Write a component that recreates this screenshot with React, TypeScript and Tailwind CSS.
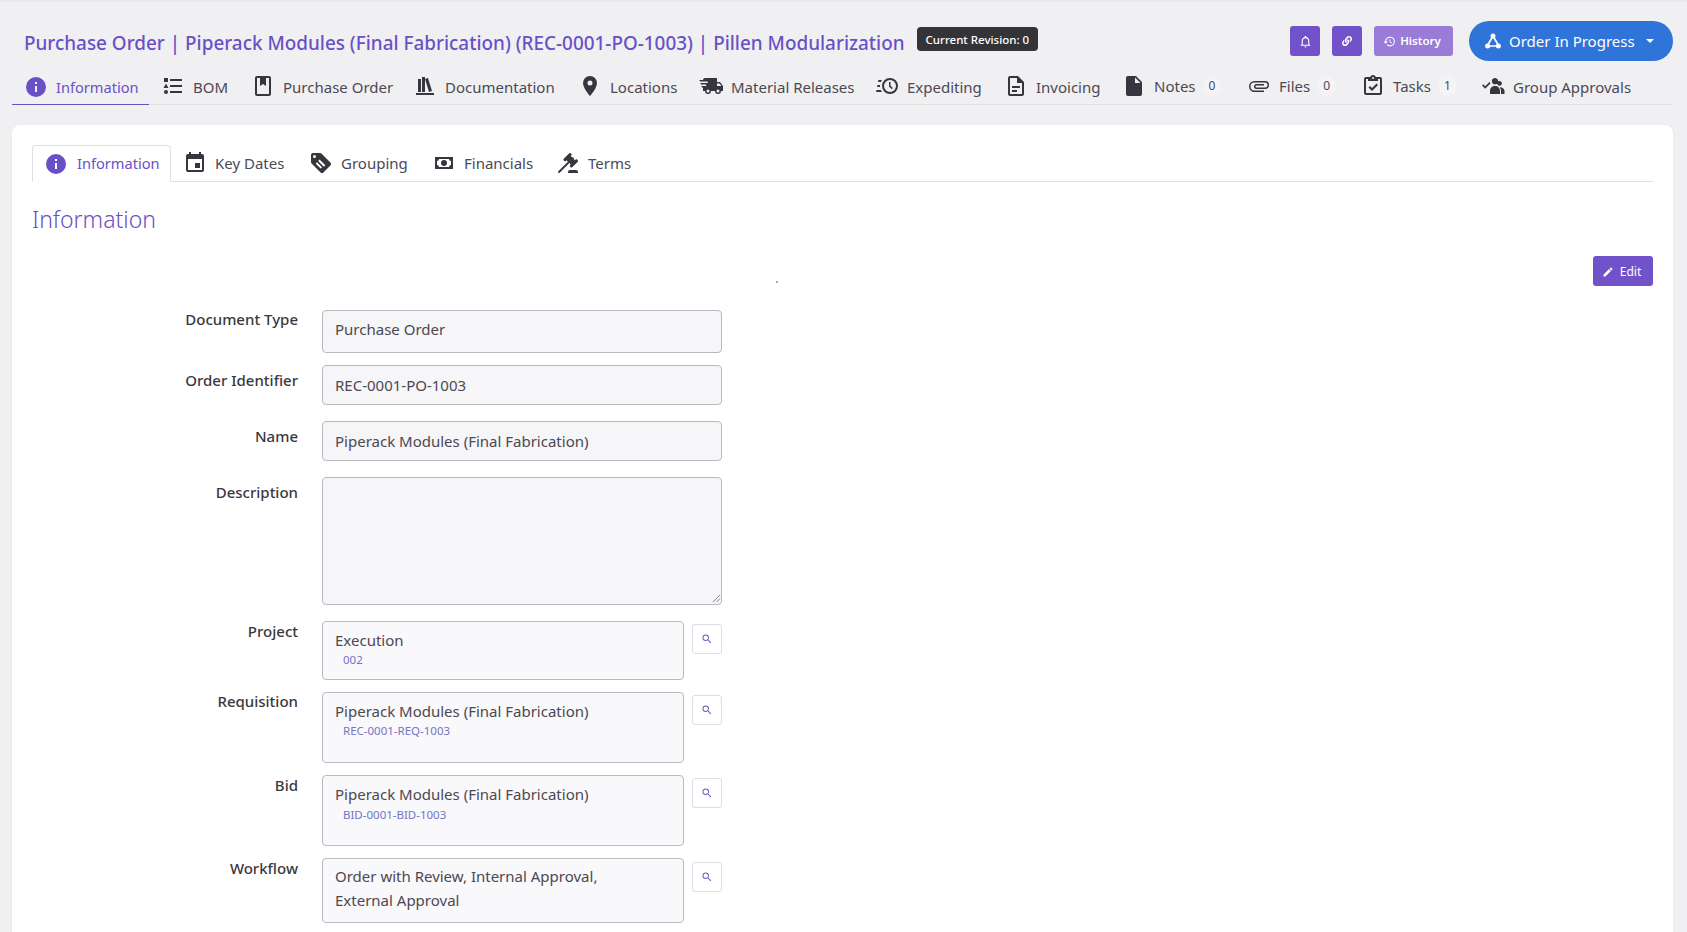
import { FaLink } from 'react-icons/fa';

const P = {
  info: 'M13,9H11V7H13M13,17H11V11H13M12,2A10,10 0 0,0 2,12A10,10 0 0,0 12,22A10,10 0 0,0 22,12A10,10 0 0,0 12,2Z',
  list: 'M5,9.5L7.5,14H2.5L5,9.5M3,4H7V8H3V4M5,20A2,2 0 0,0 7,18A2,2 0 0,0 5,16A2,2 0 0,0 3,18A2,2 0 0,0 5,20M9,5V7H21V5H9M9,19H21V17H9V19M9,13H21V11H9V13Z',
  book: 'M18 2H6C4.9 2 4 2.9 4 4V20C4 21.1 4.9 22 6 22H18C19.1 22 20 21.1 20 20V4C20 2.9 19.1 2 18 2M18 20H6V4H9V12L12 10L15 12V4H18V20Z',
  shelf: 'M9 3V18H12V3H9M12 5L16 18L19 17L15 4L12 5M5 5V18H8V5H5M3 19V21H21V19H3Z',
  marker: 'M12,11.5A2.5,2.5 0 0,1 9.5,9A2.5,2.5 0 0,1 12,6.5A2.5,2.5 0 0,1 14.5,9A2.5,2.5 0 0,1 12,11.5M12,2A7,7 0 0,0 5,9C5,14.25 12,22 12,22C12,22 19,14.25 19,9A7,7 0 0,0 12,2Z',
  truck: 'M3,13.5L2.25,12H7.5L6.9,10.5H2L1.25,9H9.05L8.45,7.5H1.11L0.25,6H4A2,2 0 0,1 6,4H18V8H21L24,12V17H22A3,3 0 0,1 19,20A3,3 0 0,1 16,17H12A3,3 0 0,1 9,20A3,3 0 0,1 6,17H4V13.5H3M19,18.5A1.5,1.5 0 0,0 20.5,17A1.5,1.5 0 0,0 19,15.5A1.5,1.5 0 0,0 17.5,17A1.5,1.5 0 0,0 19,18.5M20.5,9.5H18V12H22.46L20.5,9.5M9,18.5A1.5,1.5 0 0,0 10.5,17A1.5,1.5 0 0,0 9,15.5A1.5,1.5 0 0,0 7.5,17A1.5,1.5 0 0,0 9,18.5Z',
  clock: 'M15,4A8,8 0 0,1 23,12A8,8 0 0,1 15,20A8,8 0 0,1 7,12A8,8 0 0,1 15,4M15,6A6,6 0 0,0 9,12A6,6 0 0,0 15,18A6,6 0 0,0 21,12A6,6 0 0,0 15,6M14,8H15.5V11.78L17.83,14.11L16.77,15.17L14,12.4V8M2,18A1,1 0 0,1 1,17A1,1 0 0,1 2,16H5.83C6.14,16.71 6.54,17.38 7,18H2M3,13A1,1 0 0,1 2,12A1,1 0 0,1 3,11H5.05L5,12L5.05,13H3M4,8A1,1 0 0,1 3,7A1,1 0 0,1 4,6H7C6.54,6.62 6.14,7.29 5.83,8H4Z',
  doc: 'M6,2A2,2 0 0,0 4,4V20A2,2 0 0,0 6,22H18A2,2 0 0,0 20,20V8L14,2H6M6,4H13V9H18V20H6V4M8,12V14H16V12H8M8,16V18H13V16H8Z',
  file: 'M13,9V3.5L18.5,9M6,2C4.89,2 4,2.89 4,4V20A2,2 0 0,0 6,22H18A2,2 0 0,0 20,20V8L14,2H6Z',
  clip: 'M7.5,18A5.5,5.5 0 0,1 2,12.5A5.5,5.5 0 0,1 7.5,7H18A4,4 0 0,1 22,11A4,4 0 0,1 18,15H9.5A2.5,2.5 0 0,1 7,12.5A2.5,2.5 0 0,1 9.5,10H17V11.5H9.5A1,1 0 0,0 8.5,12.5A1,1 0 0,0 9.5,13.5H18A2.5,2.5 0 0,0 20.5,11A2.5,2.5 0 0,0 18,8.5H7.5A4,4 0 0,0 3.5,12.5A4,4 0 0,0 7.5,16.5H17V18H7.5Z',
  task: 'M19,3H14.82C14.4,1.84 13.3,1 12,1C10.7,1 9.6,1.84 9.18,3H5A2,2 0 0,0 3,5V19A2,2 0 0,0 5,21H19A2,2 0 0,0 21,19V5A2,2 0 0,0 19,3M12,3A1,1 0 0,1 13,4A1,1 0 0,1 12,5A1,1 0 0,1 11,4A1,1 0 0,1 12,3M7,7H17V5H19V19H5V5H7V7M7.5,13.5L9,12L11,14L15.5,9.5L17,11L11,17L7.5,13.5Z',
  group: 'M14 4A3.2 3.2 0 1 1 13.99 4M18.5 7A2.4 2.4 0 1 1 18.49 7M9 17C9 14 11 12 14 12S19 14 19 17V20H9V17M20 20V17C20 15.5 19.6 14.2 18.8 13.2C21 13.2 23.5 14.6 23.5 17V20H20M1 11.5L2.2 10.3L4.2 12.3L8.4 8.1L9.6 9.3L4.2 14.7L1 11.5Z',
  calendar: 'M19,19H5V8H19M16,1V3H8V1H6V3H5C3.89,3 3,3.89 3,5V19A2,2 0 0,0 5,21H19A2,2 0 0,0 21,19V5C21,3.89 20.1,3 19,3H18V1M17,12H12V17H17V12Z',
  tag: 'M21.41,11.58L12.41,2.58C12.05,2.22 11.55,2 11,2H4C2.89,2 2,2.89 2,4V11C2,11.55 2.22,12.05 2.59,12.41L11.58,21.41C11.95,21.77 12.45,22 13,22C13.55,22 14.05,21.77 14.41,21.41L21.41,14.41C21.78,14.05 22,13.55 22,13C22,12.44 21.77,11.94 21.41,11.58M5.5,7A1.5,1.5 0 1,1 5.5,4A1.5,1.5 0 1,1 5.5,7M10.6,8.6L9.2,10L14.9,15.7L16.3,14.3L10.6,8.6M8,11.2L6.6,12.6L11.6,17.6L13,16.2L8,11.2Z',
  cash: 'M3,6H21V18H3V6M12,9A3,3 0 0,1 15,12A3,3 0 0,1 12,15A3,3 0 0,1 9,12A3,3 0 0,1 12,9M7,8A2,2 0 0,1 5,10V14A2,2 0 0,1 7,16H17A2,2 0 0,1 19,14V10A2,2 0 0,1 17,8H7Z',
  gavel: 'M2.3,20.28L11.9,10.68L10.5,9.26L9.78,9.97C9.39,10.36 8.76,10.36 8.37,9.97L7.66,9.26C7.27,8.87 7.27,8.24 7.66,7.85L13.32,2.19C13.71,1.8 14.34,1.8 14.73,2.19L15.44,2.9C15.83,3.29 15.83,3.92 15.44,4.31L14.73,5L16.15,6.43C16.54,6.04 17.17,6.04 17.56,6.43C17.95,6.82 17.95,7.46 17.56,7.85L18.97,9.26L19.68,8.55C20.07,8.16 20.71,8.16 21.1,8.55L21.8,9.26C22.19,9.65 22.19,10.29 21.8,10.68L16.15,16.33C15.76,16.72 15.12,16.72 14.73,16.33L14.03,15.63C13.63,15.24 13.63,14.6 14.03,14.21L14.73,13.5L13.32,12.09L3.71,21.7C3.32,22.09 2.69,22.09 2.3,21.7C1.91,21.31 1.91,20.67 2.3,20.28M20,19A2,2 0 0,1 22,21V22H12V21A2,2 0 0,1 14,19H20Z',
  bell: 'M10 21H14C14 22.1 13.1 23 12 23S10 22.1 10 21M21 19V20H3V19L5 17V11C5 7.9 7 5.2 10 4.3V4C10 2.9 10.9 2 12 2S14 2.9 14 4V4.3C17 5.2 19 7.9 19 11V17L21 19M17 11C17 8.2 14.8 6 12 6S7 8.2 7 11V18H17V11Z',
  history: 'M13.5,8H12V13L16.28,15.54L17,14.33L13.5,12.25V8M13,3A9,9 0 0,0 4,12H1L4.96,16.03L9,12H6A7,7 0 0,1 13,5A7,7 0 0,1 20,12A7,7 0 0,1 13,19C11.07,19 9.32,18.21 8.06,16.94L6.64,18.36C8.27,20 10.5,21 13,21A9,9 0 0,0 22,12A9,9 0 0,0 13,3',
  pencil: 'M20.71,7.04C21.1,6.65 21.1,6 20.71,5.63L18.37,3.29C18,2.9 17.35,2.9 16.96,3.29L15.12,5.12L18.87,8.87M3,17.25V21H6.75L17.81,9.93L14.06,6.18L3,17.25Z',
  search: 'M9.5,3A6.5,6.5 0 0,1 16,9.5C16,11.11 15.41,12.59 14.44,13.73L14.71,14H15.5L20.5,19L19,20.5L14,15.5V14.71L13.73,14.44C12.59,15.41 11.11,16 9.5,16A6.5,6.5 0 0,1 3,9.5A6.5,6.5 0 0,1 9.5,3M9.5,5C7,5 5,7 5,9.5C5,12 7,14 9.5,14C12,14 14,12 14,9.5C14,7 12,5 9.5,5Z',
};

function Icon({ d, className }: { d: string; className?: string }) {
  return (
    <svg viewBox="0 0 24 24" fill="currentColor" className={className}>
      {/* the tag's stripes are holes cut out of its body */}
      <path d={d} fillRule={d === P.tag ? 'evenodd' : undefined} />
    </svg>
  );
}

const navItems = [
  { label: 'Information', icon: P.info, width: 'w-[137px]', active: true },
  { label: 'BOM', icon: P.list, width: 'w-[90px]' },
  { label: 'Purchase Order', icon: P.book, width: 'w-[162px]' },
  { label: 'Documentation', icon: P.shelf, width: 'w-[165px]' },
  { label: 'Locations', icon: P.marker, width: 'w-[121px]' },
  { label: 'Material Releases', icon: P.truck, width: 'w-[176px]' },
  { label: 'Expediting', icon: P.clock, width: 'w-[129px]' },
  { label: 'Invoicing', icon: P.doc, width: 'w-[118px]' },
  { label: 'Notes', icon: P.file, width: 'w-[125px]', count: 0 },
  { label: 'Files', icon: P.clip, width: 'w-[114px]', count: 0 },
  { label: 'Tasks', icon: P.task, width: 'w-[120px]', count: 1 },
  { label: 'Group Approvals', icon: P.group, width: 'w-[188px]' },
];

const subTabs = [
  { label: 'Key Dates', icon: P.calendar, width: 'w-[126px]' },
  { label: 'Grouping', icon: P.tag, width: 'w-[123px]' },
  { label: 'Financials', icon: P.cash, width: 'w-[124px]' },
  { label: 'Terms', icon: P.gavel, width: 'w-[90px]' },
];

function Label({ children, className }: { children: string; className: string }) {
  return <div className={`w-[286px] shrink-0 text-right font-medium leading-6 text-[#3a3840] ${className}`}>{children}</div>;
}

function Field({ label, labelPad, box, value, valuePad, rowGap }: { label: string; labelPad: string; box: string; value: string; valuePad: string; rowGap: string }) {
  return (
    <div className={`flex ${rowGap}`}>
      <Label className={labelPad}>{label}</Label>
      <div className={`ml-6 w-[400px] rounded border border-[#b9b9bf] bg-[#f6f5f7] leading-6 text-[#4b4953] ${box} ${valuePad}`}>{value}</div>
    </div>
  );
}

function Lookup({ label, labelPad, box, rowGap, btnTop, children }: { label: string; labelPad: string; box: string; rowGap: string; btnTop: string; children: React.ReactNode }) {
  return (
    <div className={`flex ${rowGap}`}>
      <Label className={labelPad}>{label}</Label>
      <div className={`ml-6 w-[362px] rounded border border-[#b9b9bf] bg-[#f9f8fa] pl-3 text-[#4b4953] ${box}`}>{children}</div>
      <button className={`ml-2 flex h-[30px] w-[30px] items-center justify-center rounded-[3px] border border-[#dcdce2] bg-white text-[#6d5bc4] ${btnTop}`}>
        <Icon d={P.search} className="h-3 w-3" />
      </button>
    </div>
  );
}

export default function App() {
  return (
    <div className="h-[932px] overflow-hidden border-t-2 border-[#e9e9ea] bg-[#f0f0f3] font-['Noto_Sans',sans-serif] text-[15px] text-[#4b4953]">
      {/* header */}
      <div className="flex h-[64px] pl-[24px] pr-[14px]">
        <h1 className="mt-[25px] whitespace-nowrap text-[18.9px] font-medium leading-8 text-[#6a50c6]">
          Purchase Order | Piperack Modules (Final Fabrication) (REC-0001-PO-1003) | Pillen Modularization
        </h1>
        <span className="ml-3 mt-[25px] flex h-6 items-center whitespace-nowrap rounded bg-[#343438] px-[9px] pt-px text-[11.5px] font-medium text-white">Current Revision: 0</span>
        <div className="ml-auto flex items-start">
          <button className="mt-6 flex h-[30px] w-[30px] items-center justify-center rounded-[3px] bg-[#7252c8] text-white"><Icon d={P.bell} className="h-[13px] w-[13px]" /></button>
          <button className="ml-3 mt-6 flex h-[30px] w-[30px] items-center justify-center rounded-[3px] bg-[#7252c8] text-white"><FaLink className="h-[10px] w-[10px]" /></button>
          <button className="ml-3 mt-6 flex h-[30px] w-[79px] items-center justify-center gap-1 rounded-[3px] bg-[#9a7bd8] pr-[3px] text-[11.5px] font-semibold text-white"><Icon d={P.history} className="h-[13px] w-[13px]" />History</button>
          <button className="ml-4 mt-[19px] flex h-10 w-[204px] items-center rounded-[20px] bg-[#2f74d8] pl-[14px] text-[15px] text-white">
            <svg viewBox="0 0 24 24" className="mr-[6px] h-5 w-5" fill="currentColor" stroke="currentColor">
              <path d="M12 6L5 18H19Z" fill="none" strokeWidth="2" />
              <circle cx="12" cy="6" r="3" stroke="none" />
              <circle cx="5.5" cy="18" r="3" stroke="none" />
              <circle cx="18.5" cy="18" r="3" stroke="none" />
            </svg>
            Order In Progress
            <span className="ml-[11px] h-0 w-0 border-x-[4px] border-t-[4px] border-x-transparent border-t-white" />
          </button>
        </div>
      </div>

      {/* main nav */}
      <nav className="ml-3 mr-[14px] flex h-[39px] border-b border-[#dedee3]">
        {navItems.map((item) => (
          <div
            key={item.label}
            className={`flex h-[39px] shrink-0 items-center pl-3 ${item.width} ${item.active ? 'border-b border-[#6a50c6] text-[#6a50c6]' : ''}`}
          >
            <Icon d={item.icon} className={`mr-2 h-6 w-6 shrink-0 ${item.active ? 'mt-[3px] text-[#6a50c6]' : 'text-[#38353e]'}`} />
            <span className={item.count !== undefined ? 'pt-[1px]' : item.active ? 'pt-[5px] text-[14.6px]' : 'pt-[3px]'}>{item.label}</span>
            {item.count !== undefined && (
              <span className="ml-[7px] rounded-full bg-[#f4f4f7] px-[6px] text-[12px] leading-5">{item.count}</span>
            )}
          </div>
        ))}
      </nav>

      {/* card */}
      <div className="relative ml-3 mr-[14px] mt-5 flex h-[830px] flex-col rounded-lg bg-white px-5 pt-5 shadow-[0_0_3px_rgba(0,0,0,0.04)]">
        <div className="flex h-[37px] border-b border-[#dedee3]">
          <div className="flex h-[37px] w-[139px] items-center rounded-t border border-[#dedee3] border-b-white bg-white pl-[11px] text-[#6a50c6]">
            <Icon d={P.info} className="mr-[9px] h-6 w-6" />
            <span className="pt-px text-[14.6px]">Information</span>
          </div>
          {subTabs.map((tab) => (
            <div key={tab.label} className={`flex h-9 items-center pl-3 ${tab.width}`}>
              <Icon d={tab.icon} className="mr-2 h-6 w-6 shrink-0 text-[#38353e]" />
              <span className="pt-px">{tab.label}</span>
            </div>
          ))}
        </div>

        <h2 className="mt-[21px] text-[23px] font-light leading-8 text-[#6a50c6]">Information</h2>

        <button className="mt-[21px] flex h-[30px] w-[60px] items-center justify-center gap-[6px] self-end rounded-[3px] bg-[#7252c8] pr-[3px] pt-px text-[12px] text-white">
          <Icon d={P.pencil} className="h-3 w-3" />
          Edit
        </button>

        <span className="absolute left-[764px] top-[156px] h-[2px] w-[2px] rounded-full bg-[#c87a3a]" />

        <div className="-ml-5 mt-6 flex flex-col">
          <Field label="Document Type" labelPad="-mt-[3px]" rowGap="" box="h-[43px]" valuePad="pl-3 pt-[6px]" value="Purchase Order" />
          <Field label="Order Identifier" labelPad="pt-[3px]" rowGap="mt-3" box="h-10" valuePad="pl-3 pt-[7px]" value="REC-0001-PO-1003" />
          <Field label="Name" labelPad="pt-[3px]" rowGap="mt-4" box="h-10" valuePad="pl-3 pt-[7px]" value="Piperack Modules (Final Fabrication)" />
          <div className="relative mt-4 flex">
            <Label className="pt-[3px]">Description</Label>
            <div className="ml-6 h-[128px] w-[400px] rounded border border-[#b9b9bf] bg-[#f6f5f7]" />
            <svg viewBox="0 0 10 10" className="absolute left-[700px] top-[117px] h-[9px] w-[9px] text-[#777]" stroke="currentColor" strokeWidth="1"><path d="M1 9L9 1M5 9L9 5" /></svg>
          </div>
          <Lookup label="Project" labelPad="-mt-[2px]" rowGap="mt-4" box="h-[59px] pt-[6px]" btnTop="mt-[3px]">
            <div className="leading-6">Execution</div>
            <div className="pl-2 text-[11.5px] leading-[15px] text-[#7474c8]">002</div>
          </Lookup>
          <Lookup label="Requisition" labelPad="-mt-[3px]" rowGap="mt-3" box="h-[71px] pt-[6px]" btnTop="mt-[3px]">
            <div className="leading-6">Piperack Modules (Final Fabrication)</div>
            <div className="pl-2 text-[11.5px] leading-[15px] text-[#7474c8]">REC-0001-REQ-1003</div>
          </Lookup>
          <Lookup label="Bid" labelPad="-mt-[2px]" rowGap="mt-3" box="h-[71px] pt-[6px]" btnTop="mt-[3px]">
            <div className="leading-6">Piperack Modules (Final Fabrication)</div>
            <div className="pl-2 pt-px text-[11.5px] leading-[15px] text-[#7474c8]">BID-0001-BID-1003</div>
          </Lookup>
          <Lookup label="Workflow" labelPad="-mt-[2px]" rowGap="mt-3" box="h-[65px] pt-[6px]" btnTop="mt-1">
            <div className="leading-[23.5px]">Order with Review, Internal Approval,<br />External Approval</div>
          </Lookup>
        </div>
      </div>
    </div>
  );
}
